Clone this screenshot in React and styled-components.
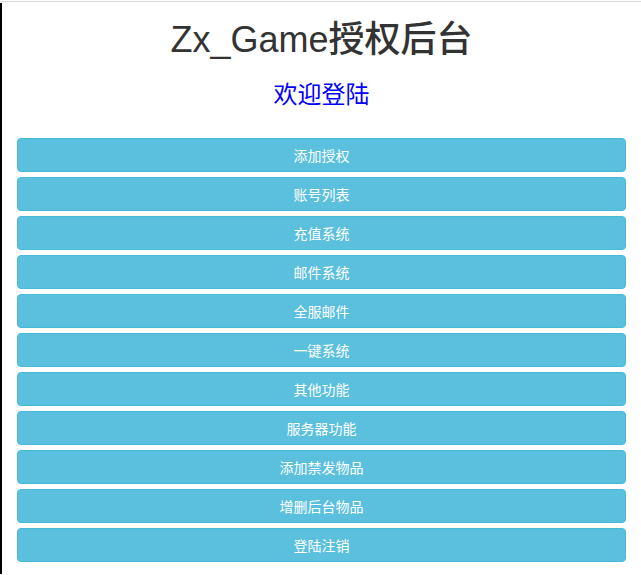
import React from 'react'
import styled, { createGlobalStyle } from 'styled-components'

const GlobalStyle = createGlobalStyle`
  html, body {
    margin: 0;
    padding: 0;
    background: #fff;
  }
  body {
    font-family: "Liberation Sans", Arial, "Noto Sans CJK SC", sans-serif;
    font-size: 14px;
    line-height: 1.42857;
    color: #333;
  }
`

const Frame = styled.div`
  padding-top: 1px;
  border-top: 1px solid #dcdcdc;
  margin-top: 1px;
  min-height: 573px;
  box-sizing: border-box;
  display: flex;
`

const Page = styled.div`
  flex: 1;
  border-left: 2px solid #000;
  padding: 0 15px;
  display: flow-root;
`

const Title = styled.h1`
  margin: 17px 0 10px;
  font-size: 36px;
  font-weight: 500;
  line-height: 1.1;
  text-align: center;
  color: #333;
  font-family: "Liberation Sans", Arial, "Noto Sans CJK SC", sans-serif;
`

const Welcome = styled.h3`
  margin: 20px 0 32px;
  font-size: 24px;
  font-weight: 400;
  line-height: 1.1;
  text-align: center;
  color: #0000ff;
  font-family: "Noto Sans CJK SC", sans-serif;
`

const Menu = styled.div`
  display: flex;
  flex-direction: column;
  gap: 5px;
`

const MenuButton = styled.a`
  display: block;
  padding: 6px 12px;
  font-size: 14px;
  line-height: 20px;
  text-align: center;
  color: #fff;
  background: #5bc0de;
  border: 1px solid #46b8da;
  border-radius: 4px;
  text-decoration: none;
  cursor: pointer;
  font-family: "Noto Sans CJK SC", sans-serif;
  &:hover {
    background: #31b0d5;
    border-color: #269abc;
  }
`

const items = [
  '添加授权',
  '账号列表',
  '充值系统',
  '邮件系统',
  '全服邮件',
  '一键系统',
  '其他功能',
  '服务器功能',
  '添加禁发物品',
  '增删后台物品',
  '登陆注销',
]

export default function App() {
  return (
    <Frame>
      <GlobalStyle />
      <Page>
        <Title>Zx_Game授权后台</Title>
        <Welcome>欢迎登陆</Welcome>
        <Menu>
          {items.map((label) => (
            <MenuButton key={label}>{label}</MenuButton>
          ))}
        </Menu>
      </Page>
    </Frame>
  )
}
